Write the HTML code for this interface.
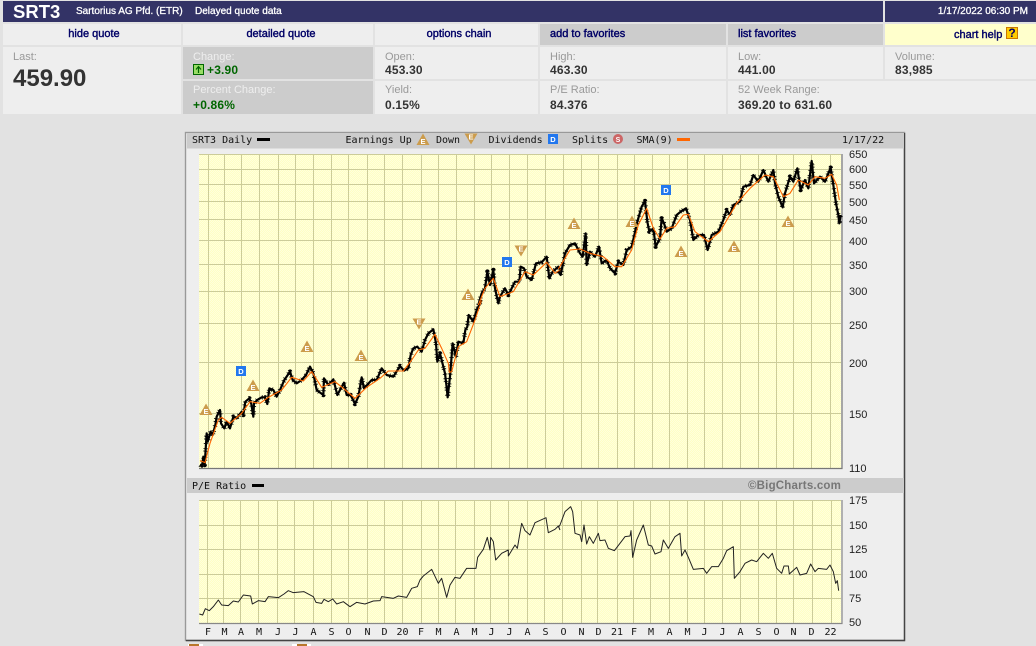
<!DOCTYPE html>
<html><head><meta charset="utf-8"><title>SRT3</title>
<style>
html,body{margin:0;padding:0;width:1036px;height:646px;overflow:hidden;background:#e2e2e2;font-family:"Liberation Sans",Arial,sans-serif}
.b{position:absolute;box-sizing:border-box;white-space:nowrap}
.n{background:#333366;color:#fff;font-size:10px;-webkit-text-stroke:.3px #fff}
.l{background:#eee}.d{background:#ccc}
.m{color:#000066;font-size:11px;line-height:21px;-webkit-text-stroke:.4px #000066}
.lab{position:absolute;font-size:11px;line-height:13px;color:#999;left:10px;top:4px}
.val{position:absolute;font-size:12px;font-weight:bold;line-height:14px;color:#333;left:10px;top:16px;letter-spacing:.18px}
.d .lab{color:#eee}.d .val{color:#006600}
svg{position:absolute;left:0;top:0}
svg text{white-space:pre}
.mono{font-family:"DejaVu Sans Mono","Liberation Mono",monospace;font-size:10px;fill:#111}
.ax{font-family:"Liberation Sans",Arial,sans-serif;font-size:11px;fill:#222}
.mk{font-family:"Liberation Sans",Arial,sans-serif;font-size:7.5px;font-weight:bold;fill:#fff;text-anchor:middle}
</style></head><body>
<div class="b n" style="left:3px;top:1px;width:880px;height:21px"></div>
<div class="b" style="left:13px;top:1px;font-size:18.5px;font-weight:bold;color:#fff;line-height:22px">SRT3</div>
<div class="b" style="left:76px;top:1px;font-size:10px;color:#fff;line-height:21px;-webkit-text-stroke:.3px #fff">Sartorius AG Pfd. (ETR)</div>
<div class="b" style="left:195px;top:1px;font-size:10px;color:#fff;line-height:21px;-webkit-text-stroke:.3px #fff">Delayed quote data</div>
<div class="b n" style="left:885px;top:1px;width:151px;height:21px;line-height:21px;text-align:right;padding-right:8px">1/17/2022 06:30 PM</div>

<div class="b l m" style="left:3px;top:24px;width:178px;height:21px;text-align:center;padding-left:4px">hide quote</div>
<div class="b l m" style="left:183px;top:24px;width:190px;height:21px;text-align:center;padding-left:6px">detailed quote</div>
<div class="b l m" style="left:375px;top:24px;width:163px;height:21px;text-align:center;padding-left:5px">options chain</div>
<div class="b d m" style="left:540px;top:24px;width:186px;height:21px;padding-left:10px">add to favorites</div>
<div class="b d m" style="left:728px;top:24px;width:155px;height:21px;padding-left:10px">list favorites</div>
<div class="b m" style="left:885px;top:24px;width:151px;height:21px;background:#ffffcc;padding-left:69px;line-height:23px">chart help</div>
<div class="b" style="left:1006px;top:27px;width:12px;height:12px;background:#ffcc00;border:1px solid #cc7700;color:#000066;font-weight:bold;font-size:12px;line-height:10px;text-align:center">?</div>

<div class="b l" style="left:3px;top:47px;width:178px;height:67px"><div class="lab">Last:</div><div style="position:absolute;left:10px;top:18px;font-size:24px;font-weight:bold;color:#333;line-height:28px">459.90</div></div>
<div class="b d" style="left:183px;top:47px;width:190px;height:32px"><div class="lab">Change:</div><div class="val" style="left:24px">+3.90</div></div>
<div class="b" style="left:193px;top:64px;width:11px;height:11px;background:#99dd66;border:1px solid #006600"></div>
<svg width="1036" height="646" style="z-index:2;pointer-events:none"><path d="M198.5 73V67M196 69.5L198.5 66.5L201 69.5" fill="none" stroke="#006600" stroke-width="1.2"/></svg>
<div class="b d" style="left:183px;top:81px;width:190px;height:33px"><div class="lab" style="top:3px">Percent Change:</div><div class="val" style="top:17px">+0.86%</div></div>
<div class="b l" style="left:375px;top:47px;width:163px;height:32px"><div class="lab">Open:</div><div class="val">453.30</div></div>
<div class="b l" style="left:375px;top:81px;width:163px;height:33px"><div class="lab" style="top:3px">Yield:</div><div class="val" style="top:17px">0.15%</div></div>
<div class="b l" style="left:540px;top:47px;width:186px;height:32px"><div class="lab">High:</div><div class="val">463.30</div></div>
<div class="b l" style="left:540px;top:81px;width:186px;height:33px"><div class="lab" style="top:3px">P/E Ratio:</div><div class="val" style="top:17px">84.376</div></div>
<div class="b l" style="left:728px;top:47px;width:155px;height:32px"><div class="lab">Low:</div><div class="val">441.00</div></div>
<div class="b l" style="left:728px;top:81px;width:308px;height:33px"><div class="lab" style="top:3px">52 Week Range:</div><div class="val" style="top:17px">369.20 to 631.60</div></div>
<div class="b l" style="left:885px;top:47px;width:151px;height:32px"><div class="lab">Volume:</div><div class="val">83,985</div></div>

<svg width="1036" height="646" viewBox="0 0 1036 646">
<defs>
<pattern id="dz" width="2" height="2" patternUnits="userSpaceOnUse"><rect width="2" height="2" fill="#ffffc4"/><rect width="1" height="1" fill="#ffffdc"/><rect x="1" y="1" width="1" height="1" fill="#ffffdc"/></pattern>
<g id="up"><path d="M0-6.5L6.5 5H-6.5Z" fill="#cc9c4c"/><text class="mk" x="0" y="3.8">E</text></g>
<g id="dn"><path d="M0 5.5L6.5-5.5H-6.5Z" fill="#cc9c4c"/><text class="mk" x="0" y="0.5">E</text></g>
<g id="dv"><rect x="-5" y="-5" width="10" height="10" fill="#2277ee"/><text class="mk" x="0" y="2.8">D</text></g>
<path id="p1" vector-effect="non-scaling-stroke" d="M60,495 L66,500 70,470 74,495 80,400 83,425 92,395 98,405 106,375 110,350 120,330 123,370 133,385 140,365 150,385 160,350 170,355 185,335 190,345 196,305 208,295 214,312 220,350 222,310 232,300 245,292 255,292 262,312 268,265 280,270 290,290 300,270 313,240 330,215 338,240 350,250 365,240 378,225 390,200 400,220 410,270 430,285 432,235 445,255 460,238 472,285 480,270 492,248 500,285 512,285 525,312 535,290 545,232 552,265 575,240 590,240 605,205 620,225 640,230 660,198 672,212 685,205 692,165 700,145 712,140 725,155 735,120 745,100 760,88 768,130 772,185 780,160 795,220 800,262 803,292 810,230 818,130 828,170 835,125 850,130 856,90 862,80 866,45 880,65 890,30 905,0"/>
<path id="p2" vector-effect="non-scaling-stroke" d="M895,540 L905,505 915,490 922,440 930,480 940,435 945,490 955,535 960,515 975,490 985,510 1005,470 1018,470 1022,425 1032,430 1040,455 1055,465 1068,415 1085,412 1100,395 1108,460 1118,440 1135,425 1145,440"/>
<path id="p3" vector-effect="non-scaling-stroke" d="M-5,440 L2,450 15,385 30,360 45,355 60,385 68,395 77,325 80,420 90,380 105,395 117,365 125,415 140,405 150,430 165,445 175,410 190,420 200,375 215,365 222,335 232,290 245,245 255,228 262,290 268,320 280,310 287,365 300,340 305,280 312,295 320,320 335,310 350,270 362,260 378,250 390,285 400,345 415,330 432,330 443,375 455,330 475,320 490,285 500,255 510,270 520,240 540,230 550,185 570,180 580,150 595,170 610,135 625,170 640,135 645,175 655,215 668,247 675,205 690,155 700,170 712,130 722,195 735,165 745,190 755,108 762,175 780,155 795,170 812,128 820,180 828,235 835,270 838,295 842,270"/>
</defs>
<rect x="185.5" y="132.5" width="719" height="508" fill="#eee" stroke="#999" stroke-width="1.4"/>
<path d="M186 640.5H904.5V133" fill="none" stroke="#444" stroke-width="1.4"/>
<rect x="187" y="133" width="717" height="15.5" fill="#ccc"/>
<rect x="187" y="478" width="717" height="15" fill="#ccc"/>

<rect x="199" y="154" width="642" height="314" fill="url(#dz)"/>
<path fill="none" stroke="#cccc99" stroke-width="1" d="M199 154.5H841M199 169.5H841M199 184.5H841M199 201.5H841M199 219.5H841M199 240.5H841M199 264.5H841M199 291.5H841M199 323.5H841M199 362.5H841M199 413.5H841
M208.5 154V468M224.5 154V468M241.5 154V468M259.5 154V468M278.5 154V468M295.5 154V468M313.5 154V468M331.5 154V468M348.5 154V468M367.5 154V468M384.5 154V468M402.5 154V468M421.5 154V468M438.5 154V468M456.5 154V468M474.5 154V468M491.5 154V468M509.5 154V468M527.5 154V468M545.5 154V468M563.5 154V468M581.5 154V468M598.5 154V468M617.5 154V468M634.5 154V468M652.5 154V468M669.5 154V468M687.5 154V468M704.5 154V468M722.5 154V468M740.5 154V468M758.5 154V468M776.5 154V468M793.5 154V468M811.5 154V468M830.5 154V468"/>
<path d="M199 468.5H842V154" fill="none" stroke="#777" stroke-width="1.2"/>

<rect x="199" y="500" width="642" height="123" fill="url(#dz)"/>
<path fill="none" stroke="#cccc99" stroke-width="1" d="M199 500.5H841M199 525.5H841M199 549.5H841M199 574.5H841M199 598.5H841
M207.5 500V623M223.5 500V623M240.5 500V623M258.5 500V623M277.5 500V623M294.5 500V623M313.5 500V623M331.5 500V623M348.5 500V623M367.5 500V623M384.5 500V623M402.5 500V623M421.5 500V623M438.5 500V623M455.5 500V623M474.5 500V623M490.5 500V623M508.5 500V623M527.5 500V623M544.5 500V623M562.5 500V623M581.5 500V623M597.5 500V623M617.5 500V623M633.5 500V623M650.5 500V623M669.5 500V623M687.5 500V623M704.5 500V623M722.5 500V623M740.5 500V623M758.5 500V623M776.5 500V623M793.5 500V623M812.5 500V623M831.5 500V623"/>
<path d="M199 623.5H842V500" fill="none" stroke="#888" stroke-width="1.2"/>

<!-- price -->
<g fill="none" stroke-linejoin="round">
<g transform="translate(180 300) scale(.33333)">
<use href="#p1" stroke="#000" stroke-width="2.2"/>
<use href="#p1" stroke="#000" stroke-width="4.5" stroke-dasharray=".8 3.7 .8 2.1 .8 5.3 .8 1.6 .8 4.4"/>
<path vector-effect="non-scaling-stroke" stroke="#f60" stroke-width="1.1" d="M60,482 75,488 90,430 115,360 125,352 150,370 185,340 210,305 240,310 265,292 305,270 335,232 370,243 395,215 425,262 465,245 490,265 525,295 560,262 600,235 625,213 670,213 695,180 715,150 735,145 765,103 785,145 805,190 808,217 815,215 835,140 860,125 885,60 905,0"/>
</g>
<g transform="translate(180 125) scale(.33333)">
<use href="#p2" stroke="#000" stroke-width="2.2"/>
<use href="#p2" stroke="#000" stroke-width="4.5" stroke-dasharray=".8 3.7 .8 2.1 .8 5.3 .8 1.6 .8 4.4"/>
<path vector-effect="non-scaling-stroke" stroke="#f60" stroke-width="1.1" d="M895,540 915,490 940,460 960,515 1000,500 1035,440 1060,450 1100,412 1125,445 1145,432"/>
</g>
<g transform="translate(560 125) scale(.33333)">
<use href="#p3" stroke="#000" stroke-width="2.2"/>
<use href="#p3" stroke="#000" stroke-width="4.5" stroke-dasharray=".8 3.7 .8 2.1 .8 5.3 .8 1.6 .8 4.4"/>
<path vector-effect="non-scaling-stroke" stroke="#f60" stroke-width="1.1" d="M-5,432 30,375 60,372 90,385 130,395 165,425 185,425 215,375 235,300 260,250 280,310 300,342 320,310 345,305 370,270 385,268 405,320 445,350 480,320 530,235 570,190 615,150 640,155 670,215 690,205 715,165 745,180 765,155 795,160 815,148 830,180 838,225"/>
</g>
<!-- P/E -->
<g transform="translate(180 470) scale(.33333)">
<path vector-effect="non-scaling-stroke" stroke="#222" stroke-width="1" d="M58,432 68,435 76,416 88,422 100,410 115,390 125,405 145,407 160,393 175,396 190,375 212,378 217,402 235,392 255,395 265,380 295,383 312,372 325,362 340,368 372,365 400,380 408,397 425,400 432,388 445,395 458,387 470,402 490,395 510,410 530,397 555,402 580,393 600,392 605,380 640,385 655,378 680,382 695,355 712,350 720,330 730,318 755,298 775,340 785,325 800,382 810,345 825,322 840,325 860,295 888,295 893,262 910,238 922,202 930,240 932,202 940,215 947,270 965,250 985,240 985,258 1005,225 1012,235 1025,160 1035,182 1050,195 1065,158 1098,143 1105,188 1125,178 1135,168 1140,180"/>
</g>
<g transform="translate(560 470) scale(.33333)">
<path vector-effect="non-scaling-stroke" stroke="#222" stroke-width="1" d="M-5,172 0,165 15,125 32,110 38,125 45,190 60,195 65,215 72,165 80,222 88,200 100,220 115,190 120,212 135,210 145,235 163,242 180,220 195,200 210,198 213,182 218,262 230,210 250,165 265,225 275,228 285,252 303,245 310,210 325,235 345,200 360,190 365,258 375,240 385,262 400,298 430,295 440,310 455,290 475,290 490,265 500,242 520,230 523,325 540,305 555,280 575,270 590,275 610,250 625,265 637,250 650,295 665,310 672,288 685,288 688,312 710,292 720,315 740,310 752,282 765,305 775,295 800,298 810,285 820,305 827,340 832,332 836,362"/>
</g>
</g>

<!-- markers -->
<use href="#up" x="206" y="410"/><use href="#up" x="253" y="386"/><use href="#up" x="307" y="347"/><use href="#up" x="361" y="356"/><use href="#up" x="468" y="295"/><use href="#up" x="574" y="224"/><use href="#up" x="632" y="222"/><use href="#up" x="681" y="252"/><use href="#up" x="734" y="247"/><use href="#up" x="788" y="222"/>
<use href="#dn" x="419" y="324"/><use href="#dn" x="521" y="251"/>
<use href="#dv" x="241" y="371"/><use href="#dv" x="507" y="262"/><use href="#dv" x="666" y="190"/>

<!-- legend -->
<text class="mono" x="192" y="143">SRT3 Daily</text>
<rect x="257" y="138" width="13" height="3" fill="#000"/>
<text class="mono" x="345.5" y="143">Earnings Up</text>
<use href="#up" x="423" y="140"/>
<text class="mono" x="436" y="143">Down</text>
<use href="#dn" x="471" y="139"/>
<text class="mono" x="488.5" y="143">Dividends</text>
<use href="#dv" x="553" y="139"/>
<text class="mono" x="572" y="143">Splits</text>
<circle cx="618" cy="139" r="5" fill="#cc6666"/><text x="618" y="142" text-anchor="middle" font-family="Liberation Sans" font-size="7" font-weight="bold" fill="#fff">S</text>
<text class="mono" x="636.5" y="143">SMA(9)</text>
<rect x="677" y="138" width="13" height="3" fill="#f60"/>
<text class="mono" x="842" y="143">1/17/22</text>

<text class="mono" x="192" y="489">P/E Ratio</text>
<rect x="252" y="484" width="12" height="3" fill="#000"/>
<text x="748" y="489" font-family="Liberation Sans" font-size="11.5" font-weight="bold" letter-spacing=".2" fill="#777">©BigCharts.com</text>

<!-- axes -->
<g class="ax">
<text class="ax" x="849" y="158">650</text><text class="ax" x="849" y="173">600</text><text class="ax" x="849" y="189">550</text><text class="ax" x="849" y="206">500</text><text class="ax" x="849" y="224">450</text><text class="ax" x="849" y="245">400</text><text class="ax" x="849" y="269">350</text><text class="ax" x="849" y="295">300</text><text class="ax" x="849" y="329">250</text><text class="ax" x="849" y="367">200</text><text class="ax" x="849" y="418">150</text><text class="ax" x="849" y="472">110</text>
<text class="ax" x="849" y="504">175</text><text class="ax" x="849" y="529">150</text><text class="ax" x="849" y="553">125</text><text class="ax" x="849" y="578">100</text><text class="ax" x="849" y="602">75</text><text class="ax" x="849" y="626">50</text>
</g>
<g text-anchor="middle">
<text class="mono" x="208" y="635">F</text><text class="mono" x="224.5" y="635">M</text><text class="mono" x="241" y="635">A</text><text class="mono" x="259" y="635">M</text><text class="mono" x="278" y="635">J</text><text class="mono" x="295.5" y="635">J</text><text class="mono" x="313.5" y="635">A</text><text class="mono" x="331.5" y="635">S</text><text class="mono" x="348.5" y="635">O</text><text class="mono" x="367.5" y="635">N</text><text class="mono" x="384.5" y="635">D</text><text class="mono" x="402.5" y="635">20</text><text class="mono" x="421" y="635">F</text><text class="mono" x="438.5" y="635">M</text><text class="mono" x="456.5" y="635">A</text><text class="mono" x="474.5" y="635">M</text><text class="mono" x="491.5" y="635">J</text><text class="mono" x="509.5" y="635">J</text><text class="mono" x="527.5" y="635">A</text><text class="mono" x="545.5" y="635">S</text><text class="mono" x="563.5" y="635">O</text><text class="mono" x="581.5" y="635">N</text><text class="mono" x="598.5" y="635">D</text><text class="mono" x="617" y="635">21</text><text class="mono" x="634" y="635">F</text><text class="mono" x="651" y="635">M</text><text class="mono" x="669.5" y="635">A</text><text class="mono" x="687.5" y="635">M</text><text class="mono" x="704.5" y="635">J</text><text class="mono" x="722.5" y="635">J</text><text class="mono" x="740.5" y="635">A</text><text class="mono" x="758.5" y="635">S</text><text class="mono" x="776.5" y="635">O</text><text class="mono" x="793.5" y="635">N</text><text class="mono" x="811.5" y="635">D</text><text class="mono" x="830.5" y="635">22</text>
</g>

<!-- clipped icons at bottom -->
<rect x="188" y="644" width="15" height="2" fill="#fff"/><rect x="189" y="644" width="10" height="2" fill="#b9772c"/>
<rect x="292" y="644" width="19" height="2" fill="#fff"/><rect x="297" y="644" width="10" height="2" fill="#b9772c"/>
</svg>
</body></html>
